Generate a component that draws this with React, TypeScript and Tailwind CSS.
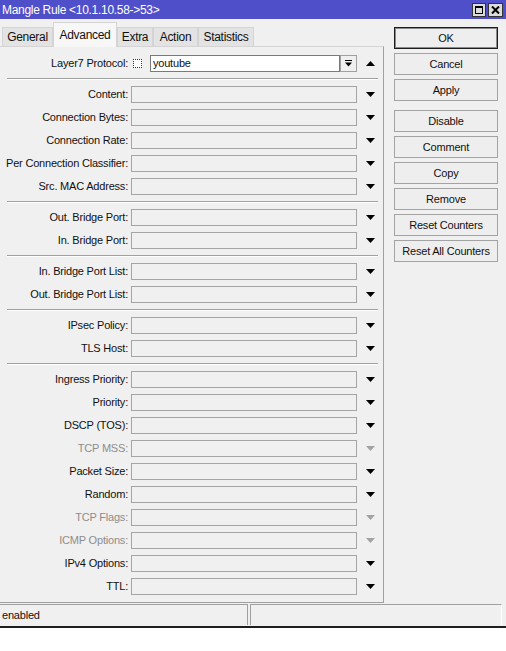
import React from "react";

const FONT = { fontFamily: "'Liberation Sans', Arial, sans-serif" };

function Tri({ up = false, disabled = false }: { up?: boolean; disabled?: boolean }) {
  const c = disabled ? "#a3a3a3" : "#000000";
  return (
    <svg width="9" height="5" viewBox="0 0 9 5" className="block">
      {up ? <polygon points="0,5 9,5 4.5,0" fill={c} /> : <polygon points="0,0 9,0 4.5,5" fill={c} />}
    </svg>
  );
}

function Label({ text, disabled }: { text: string; disabled?: boolean }) {
  return (
    <div
      className={`w-[128px] shrink-0 text-right whitespace-nowrap text-[11px] tracking-[-0.2px] ${
        disabled ? "text-[#8d8d8d]" : "text-[#111]"
      }`}
    >
      {text}
    </div>
  );
}

function Row({ label, disabled }: { label: string; disabled?: boolean }) {
  return (
    <div className="h-[23px] flex items-center">
      <Label text={label} disabled={disabled} />
      <div className="ml-[3px] w-[227px] h-[17px] border border-[#a5a5a5] bg-[#f0f0f0]" />
      <div className="w-[26px] flex justify-center pl-[1px]">
        <Tri disabled={disabled} />
      </div>
    </div>
  );
}

function Sep() {
  return (
    <div className="h-[8px] flex items-center">
      <div className="ml-[7px] w-[371px] h-[2px] border-t border-[#a0a0a0] border-b border-b-white" />
    </div>
  );
}

function Btn({ text, def }: { text: string; def?: boolean }) {
  return (
    <div
      className={`h-[22px] w-[104px] flex items-center justify-center text-[11px] tracking-[-0.2px] text-[#111] bg-[#eeeeee] border ${
        def ? "border-[#1c1c1c] shadow-[inset_0_0_0_1px_#8a8a8a]" : "border-[#a3a3a3]"
      }`}
    >
      {text}
    </div>
  );
}

export default function App() {
  const groups: { label: string; disabled?: boolean }[][] = [
    [
      { label: "Content:" },
      { label: "Connection Bytes:" },
      { label: "Connection Rate:" },
      { label: "Per Connection Classifier:" },
      { label: "Src. MAC Address:" },
    ],
    [{ label: "Out. Bridge Port:" }, { label: "In. Bridge Port:" }],
    [{ label: "In. Bridge Port List:" }, { label: "Out. Bridge Port List:" }],
    [{ label: "IPsec Policy:" }, { label: "TLS Host:" }],
    [
      { label: "Ingress Priority:" },
      { label: "Priority:" },
      { label: "DSCP (TOS):" },
      { label: "TCP MSS:", disabled: true },
      { label: "Packet Size:" },
      { label: "Random:" },
      { label: "TCP Flags:", disabled: true },
      { label: "ICMP Options:", disabled: true },
      { label: "IPv4 Options:" },
      { label: "TTL:" },
    ],
  ];

  const tabs = [
    { t: "General", w: 51 },
    { t: "Advanced", w: 64, active: true },
    { t: "Extra", w: 36 },
    { t: "Action", w: 45 },
    { t: "Statistics", w: 56 },
  ];

  return (
    <div className="w-[506px] h-[651px] bg-white overflow-hidden" style={FONT}>
      {/* Title bar */}
      <div className="h-[19px] bg-[#4f4fc9] flex items-center justify-between pl-[2px] pr-[3px]">
        <span className="text-white text-[12px] tracking-[-0.3px] leading-none">
          Mangle Rule &lt;10.1.10.58-&gt;53&gt;
        </span>
        <div className="flex gap-[2px]">
          <div className="w-[14px] h-[14px] bg-[#dcdcdc] border border-[#333] flex items-center justify-center">
            <div className="w-[8px] h-[8px] border border-black border-t-2" />
          </div>
          <div className="w-[15px] h-[14px] bg-[#dcdcdc] border border-[#333] flex items-center justify-center">
            <svg width="9" height="8" viewBox="0 0 9 8">
              <path d="M1 0.5 L8 7.5 M8 0.5 L1 7.5" stroke="#000" strokeWidth="2" />
            </svg>
          </div>
        </div>
      </div>

      <div className="bg-[#f0f0f0] flex flex-col h-[609px]">
        <div className="flex h-[584px]">
          {/* left column */}
          <div className="w-[384px] shrink-0 flex flex-col">
            {/* tabs */}
            <div className="h-[27px] flex items-end pl-[2px]">
              {tabs.map((tb) =>
                tb.active ? (
                  <div
                    key={tb.t}
                    style={{ width: tb.w }}
                    className="h-[25px] -mb-px relative z-10 bg-[#f7f7f7] border border-b-0 border-[#d4d4d4] flex items-start justify-center pt-[3px] text-[12px] tracking-[-0.3px] text-[#111]"
                  >
                    {tb.t}
                  </div>
                ) : (
                  <div
                    key={tb.t}
                    style={{ width: tb.w }}
                    className="h-[19px] bg-[#e3e3e3] border border-b-0 border-[#d4d4d4] flex items-center justify-center text-[12px] tracking-[-0.3px] text-[#111]"
                  >
                    {tb.t}
                  </div>
                )
              )}
            </div>
            {/* panel */}
            <div className="flex-1 border-t border-t-[#d4d4d4] border-r border-r-[#a0a0a0] border-b border-b-[#a0a0a0] pt-[5px] pb-[4px]">
              {/* Layer7 row */}
              <div className="h-[23px] flex items-center">
                <Label text="Layer7 Protocol:" />
                <div className="ml-[5px] w-[9px] h-[9px] border border-dotted border-[#333] bg-white" />
                <div className="ml-[8px] w-[191px] h-[17px] border border-[#7a7a7a] bg-white flex items-center pl-[2px] text-[11px] tracking-[-0.2px] text-[#111]">
                  youtube
                </div>
                <div className="w-[17px] h-[17px] border border-[#a0a0a0] bg-[#f0f0f0] flex items-center justify-center">
                  <svg width="7" height="7" viewBox="0 0 7 7">
                    <rect x="0" y="0" width="7" height="1" fill="#000" />
                    <polygon points="0,2.5 7,2.5 3.5,6.5" fill="#000" />
                  </svg>
                </div>
                <div className="w-[26px] flex justify-center">
                  <Tri up />
                </div>
              </div>
              {groups.map((g, gi) => (
                <React.Fragment key={gi}>
                  <Sep />
                  {g.map((r) => (
                    <Row key={r.label} label={r.label} disabled={r.disabled} />
                  ))}
                </React.Fragment>
              ))}
            </div>
          </div>
          {/* right buttons */}
          <div className="ml-[10px] pt-[8px] flex flex-col gap-[4px]">
            <Btn text="OK" def />
            <Btn text="Cancel" />
            <Btn text="Apply" />
            <div className="mt-[5px] flex flex-col gap-[4px]">
              <Btn text="Disable" />
              <Btn text="Comment" />
              <Btn text="Copy" />
              <Btn text="Remove" />
              <Btn text="Reset Counters" />
              <Btn text="Reset All Counters" />
            </div>
          </div>
        </div>
        {/* status bar */}
        <div className="h-[23px] pt-[1px] flex">
          <div className="w-[248px] h-[21px] border-t border-t-[#a0a0a0] border-r border-r-[#a0a0a0] flex items-center pl-[2px] text-[11px] tracking-[-0.2px] text-[#111]">
            enabled
          </div>
          <div className="ml-[2px] w-[252px] h-[21px] border-t border-t-[#a0a0a0] border-l border-l-[#a0a0a0] border-r border-r-white" />
        </div>
        <div className="h-[2px] bg-[#1e1e1e]" />
      </div>
    </div>
  );
}
